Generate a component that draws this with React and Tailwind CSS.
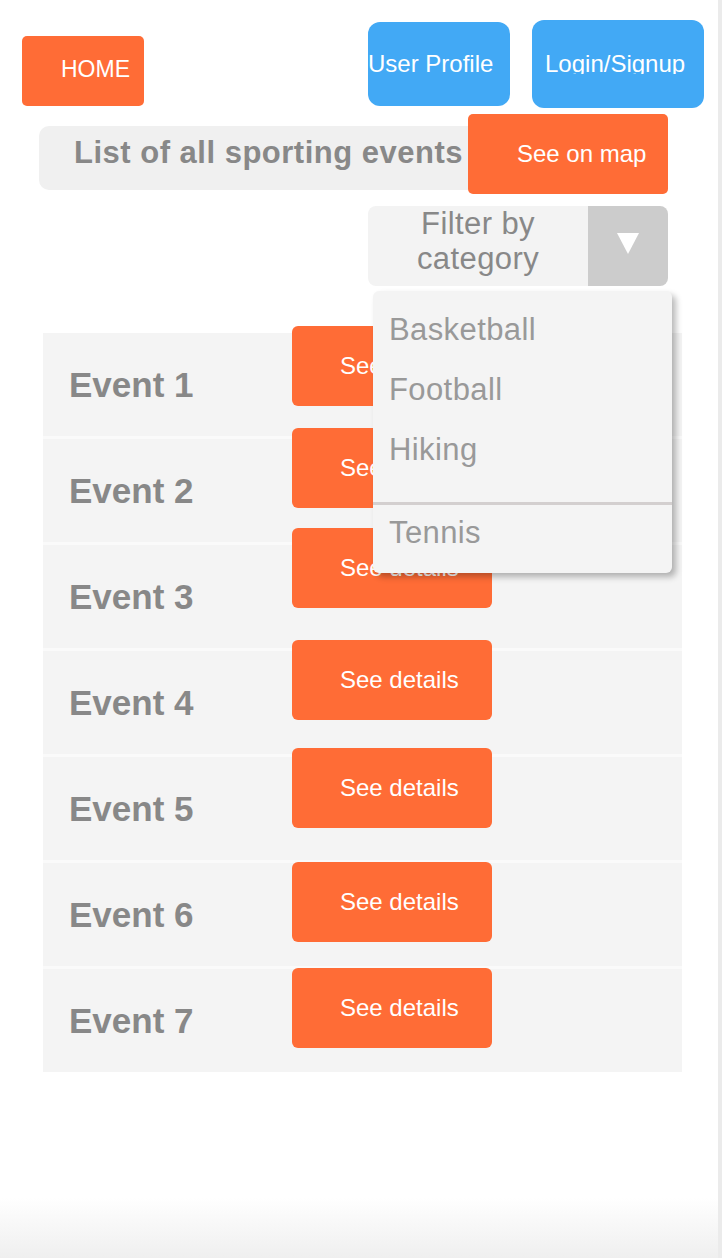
import React from "react";

// sporting events list mockup
const events = [
  { name: "Event 1", shift: "-mt-[7px]" },
  { name: "Event 2", shift: "-mt-[11px]" },
  { name: "Event 3", shift: "-mt-[17px]" },
  { name: "Event 4", shift: "-mt-[11px]" },
  { name: "Event 5", shift: "-mt-[9px]" },
  { name: "Event 6", shift: "-mt-[1px]" },
  { name: "Event 7", shift: "-mt-[1px]" },
];

const categories = ["Basketball", "Football", "Hiking"];

function FilterBox() {
  return (
    <div className="relative ml-[368px] mt-[12px] w-[300px] h-[80px] flex rounded-[8px] overflow-visible">
      <div className="w-[220px] h-[80px] bg-[#f3f3f3] rounded-l-[8px] text-center text-[31px] tracking-[0.4px] leading-[35px] text-[#888888]">
        Filter by
        <br />
        category
      </div>
      <div className="w-[80px] h-[80px] bg-[#cccccc] rounded-r-[8px] flex items-center justify-center">
        <svg width="22" height="21" viewBox="0 0 22 21" className="-mt-[5px]">
          <polygon points="0,0 22,0 11,21" fill="#ffffff" />
        </svg>
      </div>
      <div className="absolute z-10 left-[5px] top-[85px] w-[299px] h-[282px] bg-[#f4f4f4] rounded-[6px] shadow-[4px_4px_6px_rgba(0,0,0,0.28)] pt-[9px] text-[31px] tracking-[0.4px] text-[#999999]">
        {categories.map((c) => (
          <div key={c} className="h-[60px] leading-[60px] pl-[16px]">
            {c}
          </div>
        ))}
        <div className="mt-[22px] h-[3px] bg-[#d3cfcf]" />
        <div className="mt-[13px] leading-[30px] pl-[16px]">Tennis</div>
      </div>
    </div>
  );
}

export default function App() {
  return (
    <div className="flex min-h-[1258px] bg-white font-['Liberation_Sans',Arial,sans-serif]">
      <div className="w-[718px] flex flex-col">
        <div className="flex items-start pt-[20px]">
          <button className="ml-[22px] mt-[16px] w-[122px] h-[70px] bg-[#ff6c36] rounded-[5px] text-white text-[23px] leading-[23px] text-left pl-[39px] pt-[22px] self-start flex items-start">
            HOME
          </button>
          <button className="ml-[224px] mt-[2px] w-[142px] h-[84px] bg-[#42a9f5] rounded-[12px] text-white text-[24px] leading-[24px] text-left pt-[30px] flex items-start whitespace-nowrap overflow-hidden">
            User Profile
          </button>
          <button className="ml-[22px] w-[172px] h-[88px] bg-[#42a9f5] rounded-[12px] text-white text-[24px] text-left pl-[13px] pt-[31px] flex items-start whitespace-nowrap">
            <span className="block h-[23px] overflow-hidden leading-[26px]">Login/Signup</span>
          </button>
        </div>

        <div className="flex items-start">
          <div className="ml-[39px] mt-[18px] w-[439px] h-[64px] bg-[#f0f0f0] rounded-[10px] pl-[35px] pt-[12px]">
            <h1 className="text-[31px] tracking-[0.5px] leading-[30px] font-bold text-[#888888] whitespace-nowrap">
              List of all sporting events
            </h1>
          </div>
          <button className="relative -ml-[10px] mt-[6px] w-[200px] h-[80px] bg-[#ff6c36] rounded-[5px] text-white text-[24px] leading-[24px] text-left pl-[49px] pt-[28px] flex items-start whitespace-nowrap">
            See on map
          </button>
        </div>

        <FilterBox />

        <div className="ml-[43px] mt-[47px] w-[639px] flex flex-col gap-[3px] bg-[#fafafa]">
          {events.map((e) => (
            <div key={e.name} className="h-[103px] bg-[#f4f4f4] flex items-start">
              <div className="w-[249px] pl-[26px] pt-[34px] text-[35px] leading-[35px] font-bold text-[#888888]">
                {e.name}
              </div>
              <button
                className={`${e.shift} shrink-0 w-[200px] h-[80px] bg-[#ff6c36] rounded-[6px] text-white text-[24px] leading-[24px] text-left pl-[48px] pt-[28px] flex items-start whitespace-nowrap`}
              >
                See details
              </button>
            </div>
          ))}
        </div>

        <div className="flex-1" />
        <div className="h-[60px] bg-linear-to-b from-white to-[#efefef]" />
      </div>
      <div className="w-[4px] bg-[#ebebeb]" />
    </div>
  );
}
